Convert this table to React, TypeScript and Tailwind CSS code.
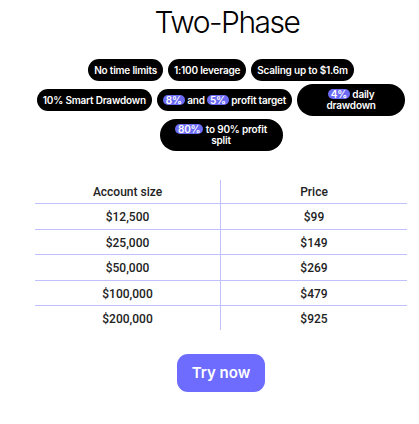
import React from "react";

const Badge = ({ children }: { children: React.ReactNode }) => (
  <span className="inline-block rounded-full bg-[#6b6bf5] px-[3px] leading-[10px] text-white">{children}</span>
);

const Pill = ({ children, className = "" }: { children: React.ReactNode; className?: string }) => (
  <div
    className={
      "flex shrink-0 items-center justify-center rounded-full bg-black px-[6px] text-center text-[10px] font-semibold leading-[10px] tracking-[-0.2px] text-white " +
      className
    }
  >
    <span>{children}</span>
  </div>
);

const rows = [
  ["$12,500", "$99"],
  ["$25,000", "$149"],
  ["$50,000", "$269"],
  ["$100,000", "$479"],
  ["$200,000", "$925"],
];

export default function App() {
  return (
    <div className="min-h-[424px] w-[419px] bg-white pl-[35px] pr-[12px] pt-1" style={{ fontFamily: "Inter, 'Noto Sans', sans-serif" }}>
      <h1 className="pl-[12px] text-center text-[30px] font-light leading-9 tracking-[-1.5px] text-black">Two-Phase</h1>

      <div className="mt-[19px] flex flex-col items-center gap-[3px]">
        <div className="flex items-center gap-[5px]">
          <Pill className="h-[22px] whitespace-nowrap">No time limits</Pill>
          <Pill className="h-[22px] whitespace-nowrap">1:100 leverage</Pill>
          <Pill className="h-[22px] whitespace-nowrap">Scaling up to $1.6m</Pill>
        </div>
        <div className="flex items-center gap-[5px]">
          <Pill className="h-[22px] whitespace-nowrap">10% Smart Drawdown</Pill>
          <Pill className="h-[22px] whitespace-nowrap">
            <Badge>8%</Badge> and <Badge>5%</Badge> profit target
          </Pill>
          <Pill className="h-[32px] w-[108px] !leading-[11px]">
            <Badge>4%</Badge> daily
            <br />
            drawdown
          </Pill>
        </div>
        <div className="flex items-center">
          <Pill className="h-[32px] w-[123px] !leading-[11px]">
            <Badge>80%</Badge> to 90% profit
            <br />
            split
          </Pill>
        </div>
      </div>

      <div className="mt-[29px] grid grid-cols-2 text-[12px] font-medium text-[#222]" style={{ fontFamily: "Roboto, 'Noto Sans', sans-serif" }}>
        <div className="flex h-[24px] items-center justify-center border-b border-r border-[#c0c0ff]">Account size</div>
        <div className="flex h-[24px] items-center justify-center border-b border-[#c0c0ff]">Price</div>
        {rows.map(([a, p], i) => {
          const last = i === rows.length - 1;
          return (
            <React.Fragment key={a}>
              <div
                className={
                  "flex items-center justify-center border-r border-[#c0c0ff] pt-[2px] " +
                  (last ? "h-[24px]" : "h-[25.5px] border-b")
                }
              >
                {a}
              </div>
              <div
                className={
                  "flex items-center justify-center border-[#c0c0ff] pt-[2px] " + (last ? "h-[24px]" : "h-[25.5px] border-b")
                }
              >
                {p}
              </div>
            </React.Fragment>
          );
        })}
      </div>

      <div className="mt-[24px] flex justify-center">
        <button className="h-[38px] w-[88px] rounded-[11px] bg-[#6e6cff] text-[15px] font-semibold text-white">Try now</button>
      </div>
    </div>
  );
}
